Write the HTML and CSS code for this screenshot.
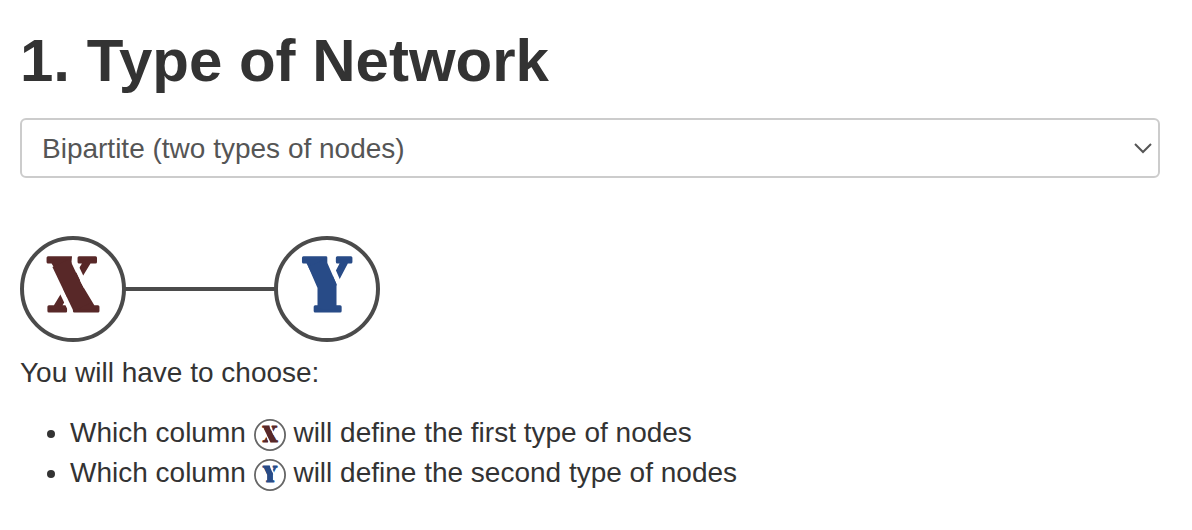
FILE: index.html
```html
<!DOCTYPE html>
<html lang="en">
<head>
<meta charset="utf-8">
<title>Type of Network</title>
<link rel="stylesheet" href="styles.css">
</head>
<body>
<main class="panel">
  <h2 class="title"><label for="network-type">1. Type of Network</label></h2>
  <div class="select-box">
    <select class="select" id="network-type">
      <option>Bipartite (two types of nodes)</option>
    </select>
    <svg class="chevron" viewBox="0 0 20 12" aria-hidden="true"><path d="M2 2 L10 10 L18 2"/></svg>
  </div>
  <svg class="diagram" viewBox="0 0 360 106" role="img" aria-label="Node X linked to node Y">
    <path class="link" d="M104 53 H256"/>
    <circle class="ring" cx="53" cy="53" r="51"/>
    <text class="letter letter-x" x="53" y="75">X</text>
    <path class="cut" d="M55 16 L54 26 L66 51 M39 50 L50 73 L49 82"/>
    <path class="stem stem-x" d="M41 27 L62 71"/>
    <g transform="translate(254 0)">
      <circle class="ring" cx="53" cy="53" r="51"/>
      <text class="letter letter-y" x="53" y="75">Y</text>
      <path class="cut" d="M56 16 L56 27 L66 50"/>
      <path class="stem stem-y" d="M43 27 L53 50 V72"/>
    </g>
  </svg>
  <p class="intro">You will have to choose:</p>
  <ul class="choices">
    <li>Which column <svg class="badge" viewBox="0 0 106 106" role="img" aria-label="X"><circle class="ring" cx="53" cy="53" r="50"/><text class="letter letter-x" x="53" y="75">X</text><path class="cut" d="M55 16 L54 26 L66 51 M39 50 L50 73 L49 82"/><path class="stem stem-x" d="M41 27 L62 71"/></svg> will define the first type of nodes</li>
    <li>Which column <svg class="badge" viewBox="0 0 106 106" role="img" aria-label="Y"><circle class="ring" cx="53" cy="53" r="50"/><text class="letter letter-y" x="53" y="75">Y</text><path class="cut" d="M56 16 L56 27 L66 50"/><path class="stem stem-y" d="M43 27 L53 50 V72"/></svg> will define the second type of nodes</li>
  </ul>
</main>
</body>
</html>
```
FILE: styles.css
```css
* { box-sizing: border-box; }
body {
  margin: 0;
  background: #fff;
  color: #333;
  font: 28px/40px "Liberation Sans", Arial, sans-serif;
}
.panel { padding: 28px 32px 32px 20px; }
.title { margin: 0 0 24px; font-size: 60px; line-height: 66px; font-weight: bold; }
.select-box { position: relative; }
.select {
  display: block;
  appearance: none;
  width: 100%;
  height: 60px;
  padding: 2px 48px 0 20px;
  border: 2px solid #ccc;
  border-radius: 6px;
  background: #fff;
  color: #555;
  font: inherit;
}
.chevron {
  position: absolute;
  right: 7px;
  top: 24px;
  width: 20px;
  height: 12px;
  fill: none;
  stroke: #555;
  stroke-width: 2;
  pointer-events: none;
}
.diagram { display: block; width: 360px; height: 106px; margin-top: 58px; }
.ring { fill: #fff; stroke: #4b4b4b; stroke-width: 4; }
.link { fill: none; stroke: #4b4b4b; stroke-width: 4; }
.letter {
  font: bold 72px "DejaVu Serif Condensed", "DejaVu Serif", serif;
  text-anchor: middle;
  stroke-width: 3;
  stroke-linejoin: round;
}
.letter-x { fill: #582828; stroke: #582828; }
.letter-y { fill: #284b87; stroke: #284b87; }
.cut { fill: none; stroke: #fff; stroke-width: 5; stroke-linejoin: round; }
.stem { fill: none; stroke-width: 19; }
.stem-x { stroke: #582828; }
.stem-y { stroke: #284b87; }
.intro { margin: 11px 0 20px; }
.choices { margin: 0; padding-left: 50px; }
.badge { width: 32px; height: 32px; margin: -4px 0; vertical-align: -5px; }
.badge .ring { stroke: #666; stroke-width: 6; }
```
